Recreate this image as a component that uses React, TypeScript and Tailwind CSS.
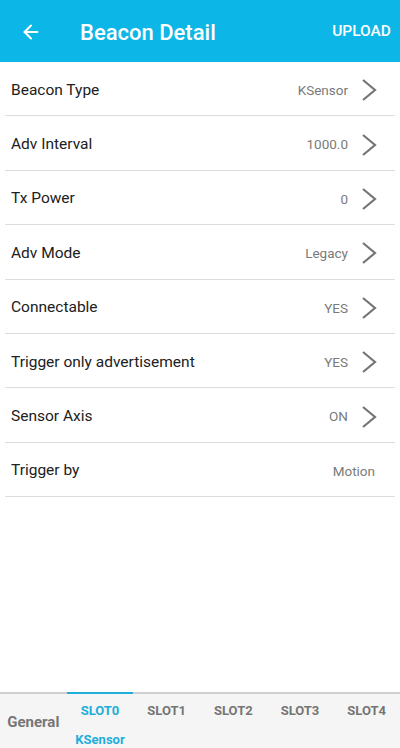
import { ArrowLeft } from 'lucide-react';

const rows = [
  { label: 'Beacon Type', value: 'KSensor', chevron: true },
  { label: 'Adv Interval', value: '1000.0', chevron: true },
  { label: 'Tx Power', value: '0', chevron: true },
  { label: 'Adv Mode', value: 'Legacy', chevron: true },
  { label: 'Connectable', value: 'YES', chevron: true },
  { label: 'Trigger only advertisement', value: 'YES', chevron: true },
  { label: 'Sensor Axis', value: 'ON', chevron: true },
  { label: 'Trigger by', value: 'Motion', chevron: false },
];

const slots = ['SLOT0', 'SLOT1', 'SLOT2', 'SLOT3', 'SLOT4'];

const Chevron = () => (
  <svg width="16" height="24" viewBox="0 0 16 24" className="ml-[13px]">
    <polyline points="2,2 14,12 2,22" fill="none" stroke="#757575" strokeWidth="2.2" />
  </svg>
);

export default function App() {
  return (
    <div
      className="flex h-[748px] w-[400px] flex-col overflow-hidden bg-white"
      style={{ fontFamily: 'Roboto, "Noto Sans", sans-serif' }}
    >
      {/* header */}
      <header className="flex h-[62px] shrink-0 items-center bg-[#0cb6e6] pt-[2px] text-white">
        <div className="flex w-[80px] items-center pl-[20px]">
          <ArrowLeft size={22} strokeWidth={2.2} />
        </div>
        <h1 className="flex-1 text-[22px] font-medium">Beacon Detail</h1>
        <span className="pr-[9px] text-[15.5px] font-medium">UPLOAD</span>
      </header>

      {/* list */}
      <div className="flex-1">
        {rows.map(({ label, value, chevron }) => (
          <div
            key={label}
            className={
              chevron
                ? 'mx-[5px] flex h-[54.4px] items-center border-b border-[#dcdcdc] pl-[6px] pr-[18px] pt-[3px]'
                : 'mx-[5px] flex h-[54.4px] items-center border-b border-[#dcdcdc] pl-[6px] pr-[20px] pt-[3px]'
            }
          >
            <span className="flex-1 text-[15.5px] text-[#212121]">{label}</span>
            <span className="text-[13.5px] text-[#7a7a7a]">{value}</span>
            {chevron && <Chevron />}
          </div>
        ))}
      </div>

      {/* bottom tabs */}
      <nav className="grid h-[56px] shrink-0 grid-cols-6 border-t-2 border-[#cfcfcf] bg-[#f5f5f5]">
        <div className="flex items-center justify-center pt-[2px] text-[15px] font-bold text-[#757575]">
          General
        </div>
        {slots.map((slot, i) => (
          <div key={slot} className="relative flex flex-col items-center">
            {i === 0 && <div className="absolute -top-[2px] left-0 right-0 h-[2px] bg-[#21aedb]" />}
            <span
              className={
                i === 0
                  ? 'mt-[7px] text-[13px] font-bold text-[#21aedb]'
                  : 'mt-[7px] text-[13px] font-bold text-[#757575]'
              }
            >
              {slot}
            </span>
            {i === 0 && <span className="mt-[9px] text-[13px] font-bold text-[#21aedb]">KSensor</span>}
          </div>
        ))}
      </nav>
    </div>
  );
}
